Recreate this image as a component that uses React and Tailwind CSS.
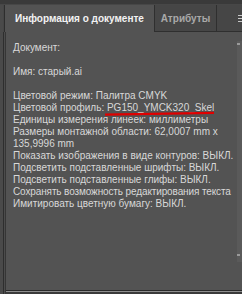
import React from "react";

const lines = [
  "Документ:",
  "",
  "Имя: старый.ai",
  "",
  "Цветовой режим: Палитра CMYK",
  "PROFILE",
  "Единицы измерения линеек: миллиметры",
  "Размеры монтажной области: 62,0007 mm x",
  "135,9996 mm",
  "Показать изображения в виде контуров: ВЫКЛ.",
  "Подсветить подставленные шрифты: ВЫКЛ.",
  "Подсветить подставленные глифы: ВЫКЛ.",
  "Сохранять возможность редактирования текста",
  "Имитировать цветную бумагу: ВЫКЛ.",
];

export default function App() {
  return (
    <div
      className="w-[242px] h-[294px] bg-[#535353] flex flex-col overflow-hidden"
      style={{ fontFamily: '"Liberation Sans", Arial, sans-serif' }}
    >
      {/* top strip */}
      <div className="h-[5px] bg-[#3a3a3a] border-b border-[#474747]" />

      {/* tabs */}
      <div className="h-[27px] flex bg-[#464646]">
        <div className="w-[5px] bg-[#464646] border-l-[3px] border-[#4a4a4a] border-r border-r-[#2e2e2e]" />
        <div className="w-[149px] bg-[#535353] flex items-center pl-[10px] text-[10px] font-bold text-[#f2f2f2] whitespace-nowrap">
          Информация о документе
        </div>
        <div className="w-[63px] flex items-center justify-center text-[10px] font-bold text-[#a9a9a9] border-l border-r border-b border-[#2f2f2f]">
          Атрибуты
        </div>
        <div className="flex-1 flex items-center justify-end border-b border-[#2f2f2f]">
          <div className="flex flex-col gap-[2px] w-[4px]">
            <div className="h-px bg-[#c8c8c8]" />
            <div className="h-px bg-[#c8c8c8]" />
            <div className="h-px bg-[#c8c8c8]" />
          </div>
        </div>
      </div>

      {/* body */}
      <div className="flex-1 flex">
        <div className="w-[6px] flex">
          <div className="w-[3px] bg-[#4a4a4a]" />
          <div className="w-px bg-[#2e2e2e]" />
          <div className="w-px bg-[#4c4c4c]" />
          <div className="w-px bg-[#363636]" />
        </div>
        <div className="flex-1 flex flex-col">
          <div className="flex-1 flex">
            <div className="w-[228px] overflow-hidden pt-[10px] pl-[7px] text-[10px] leading-[12px] text-[#d8d8d8]">
              {lines.map((t, i) =>
                t === "PROFILE" ? (
                  <div key={i} className="whitespace-nowrap h-[12px]">
                    Цветовой профиль:{" "}
                    <span className="relative inline-block">
                      PG150_YMCK320_Skel
                      <svg
                        className="absolute left-[-2px] top-[9px] w-[calc(100%+2px)] h-[5px]"
                        viewBox="0 0 100 5"
                        preserveAspectRatio="none"
                      >
                        <path
                          d="M0 3.7 L100 1.9"
                          stroke="#e00000"
                          strokeWidth="2.2"
                          vectorEffect="non-scaling-stroke"
                        />
                      </svg>
                    </span>
                  </div>
                ) : (
                  <div
                    key={i}
                    className={
                      i === 12
                        ? "whitespace-nowrap h-[12px] tracking-[-0.12px]"
                        : "whitespace-nowrap h-[12px]"
                    }
                  >
                    {t}
                  </div>
                )
              )}
            </div>
            <div className="flex-1 flex flex-col pt-[9px] pb-[28px] items-end">
              <div className="w-[5px] flex-1 bg-[#5a5a5a] flex flex-col justify-between py-[2px]">
                <div className="h-[2px] w-[3px] bg-[#9a9a9a]" />
                <div className="h-[2px] w-[3px] bg-[#9a9a9a] mb-[4px]" />
              </div>
            </div>
          </div>
          <div className="h-[4px] flex flex-col">
            <div className="h-px bg-[#2a2a2a]" />
            <div className="h-px bg-[#8e8e8e]" />
            <div className="flex-1 bg-[#3a3a3a]" />
          </div>
        </div>
      </div>
    </div>
  );
}
